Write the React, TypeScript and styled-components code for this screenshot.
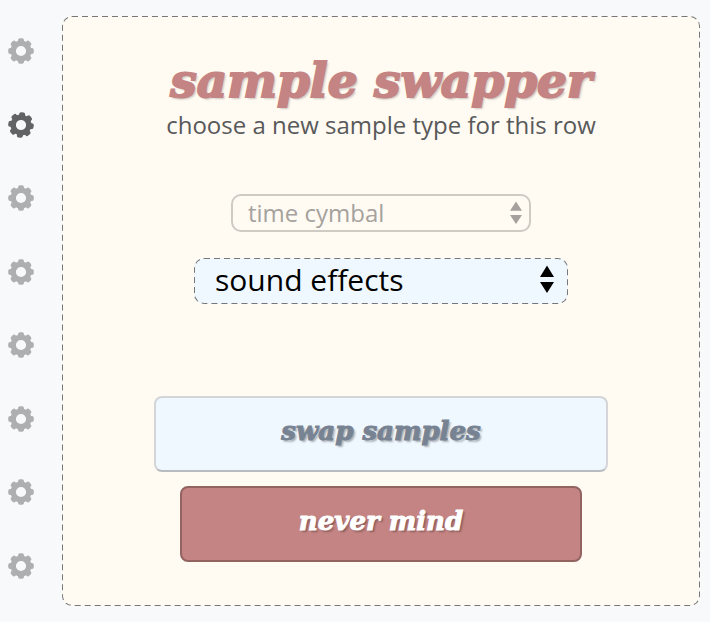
import React from "react";
import styled, { createGlobalStyle, css } from "styled-components";

const GlobalStyle = createGlobalStyle`
  * { box-sizing: border-box; }
  body {
    margin: 0;
    background: #f7f9fb;
    font-family: "Open Sans", "Noto Sans", sans-serif;
    font-weight: 400;
  }
`;

const displayFont = css`
  font-family: "DejaVu Serif", serif;
  font-weight: 700;
  font-style: italic;
`;

const dashedOutline = css`
  position: relative;
  overflow: hidden;

  &::after {
    content: "";
    position: absolute;
    inset: -1px;
    border: 2px dashed #77777a;
    border-radius: 11px;
    pointer-events: none;
  }
`;

const Page = styled.div`
  display: flex;
  gap: 28px;
  min-height: 100vh;
  padding: 16px 10px 16px 8px;
`;

const GearColumn = styled.nav`
  display: flex;
  flex-direction: column;
  justify-content: space-between;
  padding: 22px 0 27px;
`;

const GearButton = styled.button<{ $active: boolean }>`
  display: block;
  width: 26px;
  height: 26px;
  padding: 0;
  border: 0;
  background: none;
  color: ${(p) => (p.$active ? "#616365" : "#adafb1")};
  cursor: pointer;

  svg {
    display: block;
    transform: rotate(${(p) => (p.$active ? 6 : 0)}deg);
  }
`;

const Panel = styled.main`
  ${dashedOutline}
  display: flex;
  flex: 1;
  flex-direction: column;
  align-items: center;
  min-width: 0;
  padding: 37px 20px 44px;
  border-radius: 10px;
  background: #fffaf2;
`;

const Title = styled.h1`
  ${displayFont}
  margin: 0;
  color: #c48483;
  font-size: 47px;
  line-height: 56px;
  white-space: nowrap;
  -webkit-text-stroke: 2px #c48483;
  text-shadow: 2px 2px 2px rgba(0, 0, 0, 0.2);
`;

const Subtitle = styled.p`
  margin: 0 0 53px;
  color: #58595a;
  font-size: 24px;
  line-height: 32px;
  white-space: nowrap;
`;

const SelectBox = styled.div<{ $large?: boolean }>`
  ${(p) => (p.$large ? dashedOutline : "position: relative;")}
  width: 100%;
  max-width: ${(p) => (p.$large ? 374 : 300)}px;
  margin-bottom: ${(p) => (p.$large ? 92 : 26)}px;
  border-radius: 10px;

  svg {
    position: absolute;
    top: 7px;
    right: ${(p) => (p.$large ? 14 : 9)}px;
    pointer-events: none;
  }
`;

const Select = styled.select<{ $large?: boolean }>`
  display: block;
  width: 100%;
  height: ${(p) => (p.$large ? 46 : 38)}px;
  padding: 0 36px ${(p) => (p.$large ? 4 : 2)}px ${(p) => (p.$large ? 21 : 15)}px;
  border: ${(p) => (p.$large ? "0" : "2px solid #cecac4")};
  border-radius: 10px;
  background: ${(p) => (p.$large ? "#f0f8ff" : "transparent")};
  color: ${(p) => (p.$large ? "#000" : "#a5a29e")};
  font-family: inherit;
  font-weight: inherit;
  font-size: ${(p) => (p.$large ? 30 : 24)}px;
  opacity: 1;
  appearance: none;
`;

const ActionButton = styled.button<{ $primary?: boolean }>`
  ${displayFont}
  width: 100%;
  max-width: ${(p) => (p.$primary ? 454 : 402)}px;
  height: 76px;
  margin-bottom: ${(p) => (p.$primary ? 14 : 0)}px;
  padding: 0 0 6px;
  border: 2px solid ${(p) => (p.$primary ? "#d3d5d8" : "#936362")};
  border-bottom-color: ${(p) => (p.$primary ? "#b8bcc0" : "#936362")};
  border-radius: 8px;
  background: ${(p) => (p.$primary ? "#f0f8ff" : "#c48483")};
  color: ${(p) => (p.$primary ? "#778392" : "#fff")};
  font-size: 26px;
  -webkit-text-stroke: 1px currentColor;
  text-shadow: 2px 2px 2px rgba(0, 0, 0, 0.3);
  cursor: pointer;
`;

function Gear() {
  return (
    <svg width="26" height="26" viewBox="-13 -13 26 26" aria-hidden="true">
      <circle r="7.8" fill="none" stroke="currentColor" strokeWidth="5.4" />
      {[0, 45, 90, 135, 180, 225, 270, 315].map((angle) => (
        <rect
          key={angle}
          x="-3"
          y="-12.8"
          width="6"
          height="6"
          rx="2"
          fill="currentColor"
          transform={`rotate(${angle})`}
        />
      ))}
    </svg>
  );
}

function Arrows({ large = false }: { large?: boolean }) {
  return (
    <svg
      width={large ? 14 : 12}
      height={large ? 28 : 23}
      viewBox="0 0 14 28"
      preserveAspectRatio="none"
      fill={large ? "#000" : "#a5a29e"}
      aria-hidden="true"
    >
      <path d="M7 0.5 L14 12 H0 Z M0 17 H14 L7 28 Z" />
    </svg>
  );
}

const rows = [1, 2, 3, 4, 5, 6, 7, 8];

export default function App() {
  return (
    <>
      <GlobalStyle />
      <Page>
        <GearColumn aria-label="Row settings">
          {rows.map((row) => (
            <GearButton key={row} type="button" $active={row === 2} aria-label={`Row ${row} settings`}>
              <Gear />
            </GearButton>
          ))}
        </GearColumn>
        <Panel>
          <Title>sample swapper</Title>
          <Subtitle>choose a new sample type for this row</Subtitle>
          <SelectBox>
            <Select aria-label="Current sample type" disabled>
              <option>time cymbal</option>
            </Select>
            <Arrows />
          </SelectBox>
          <SelectBox $large>
            <Select $large aria-label="New sample type">
              <option>sound effects</option>
            </Select>
            <Arrows large />
          </SelectBox>
          <ActionButton type="button" $primary>swap samples</ActionButton>
          <ActionButton type="button">never mind</ActionButton>
        </Panel>
      </Page>
    </>
  );
}
